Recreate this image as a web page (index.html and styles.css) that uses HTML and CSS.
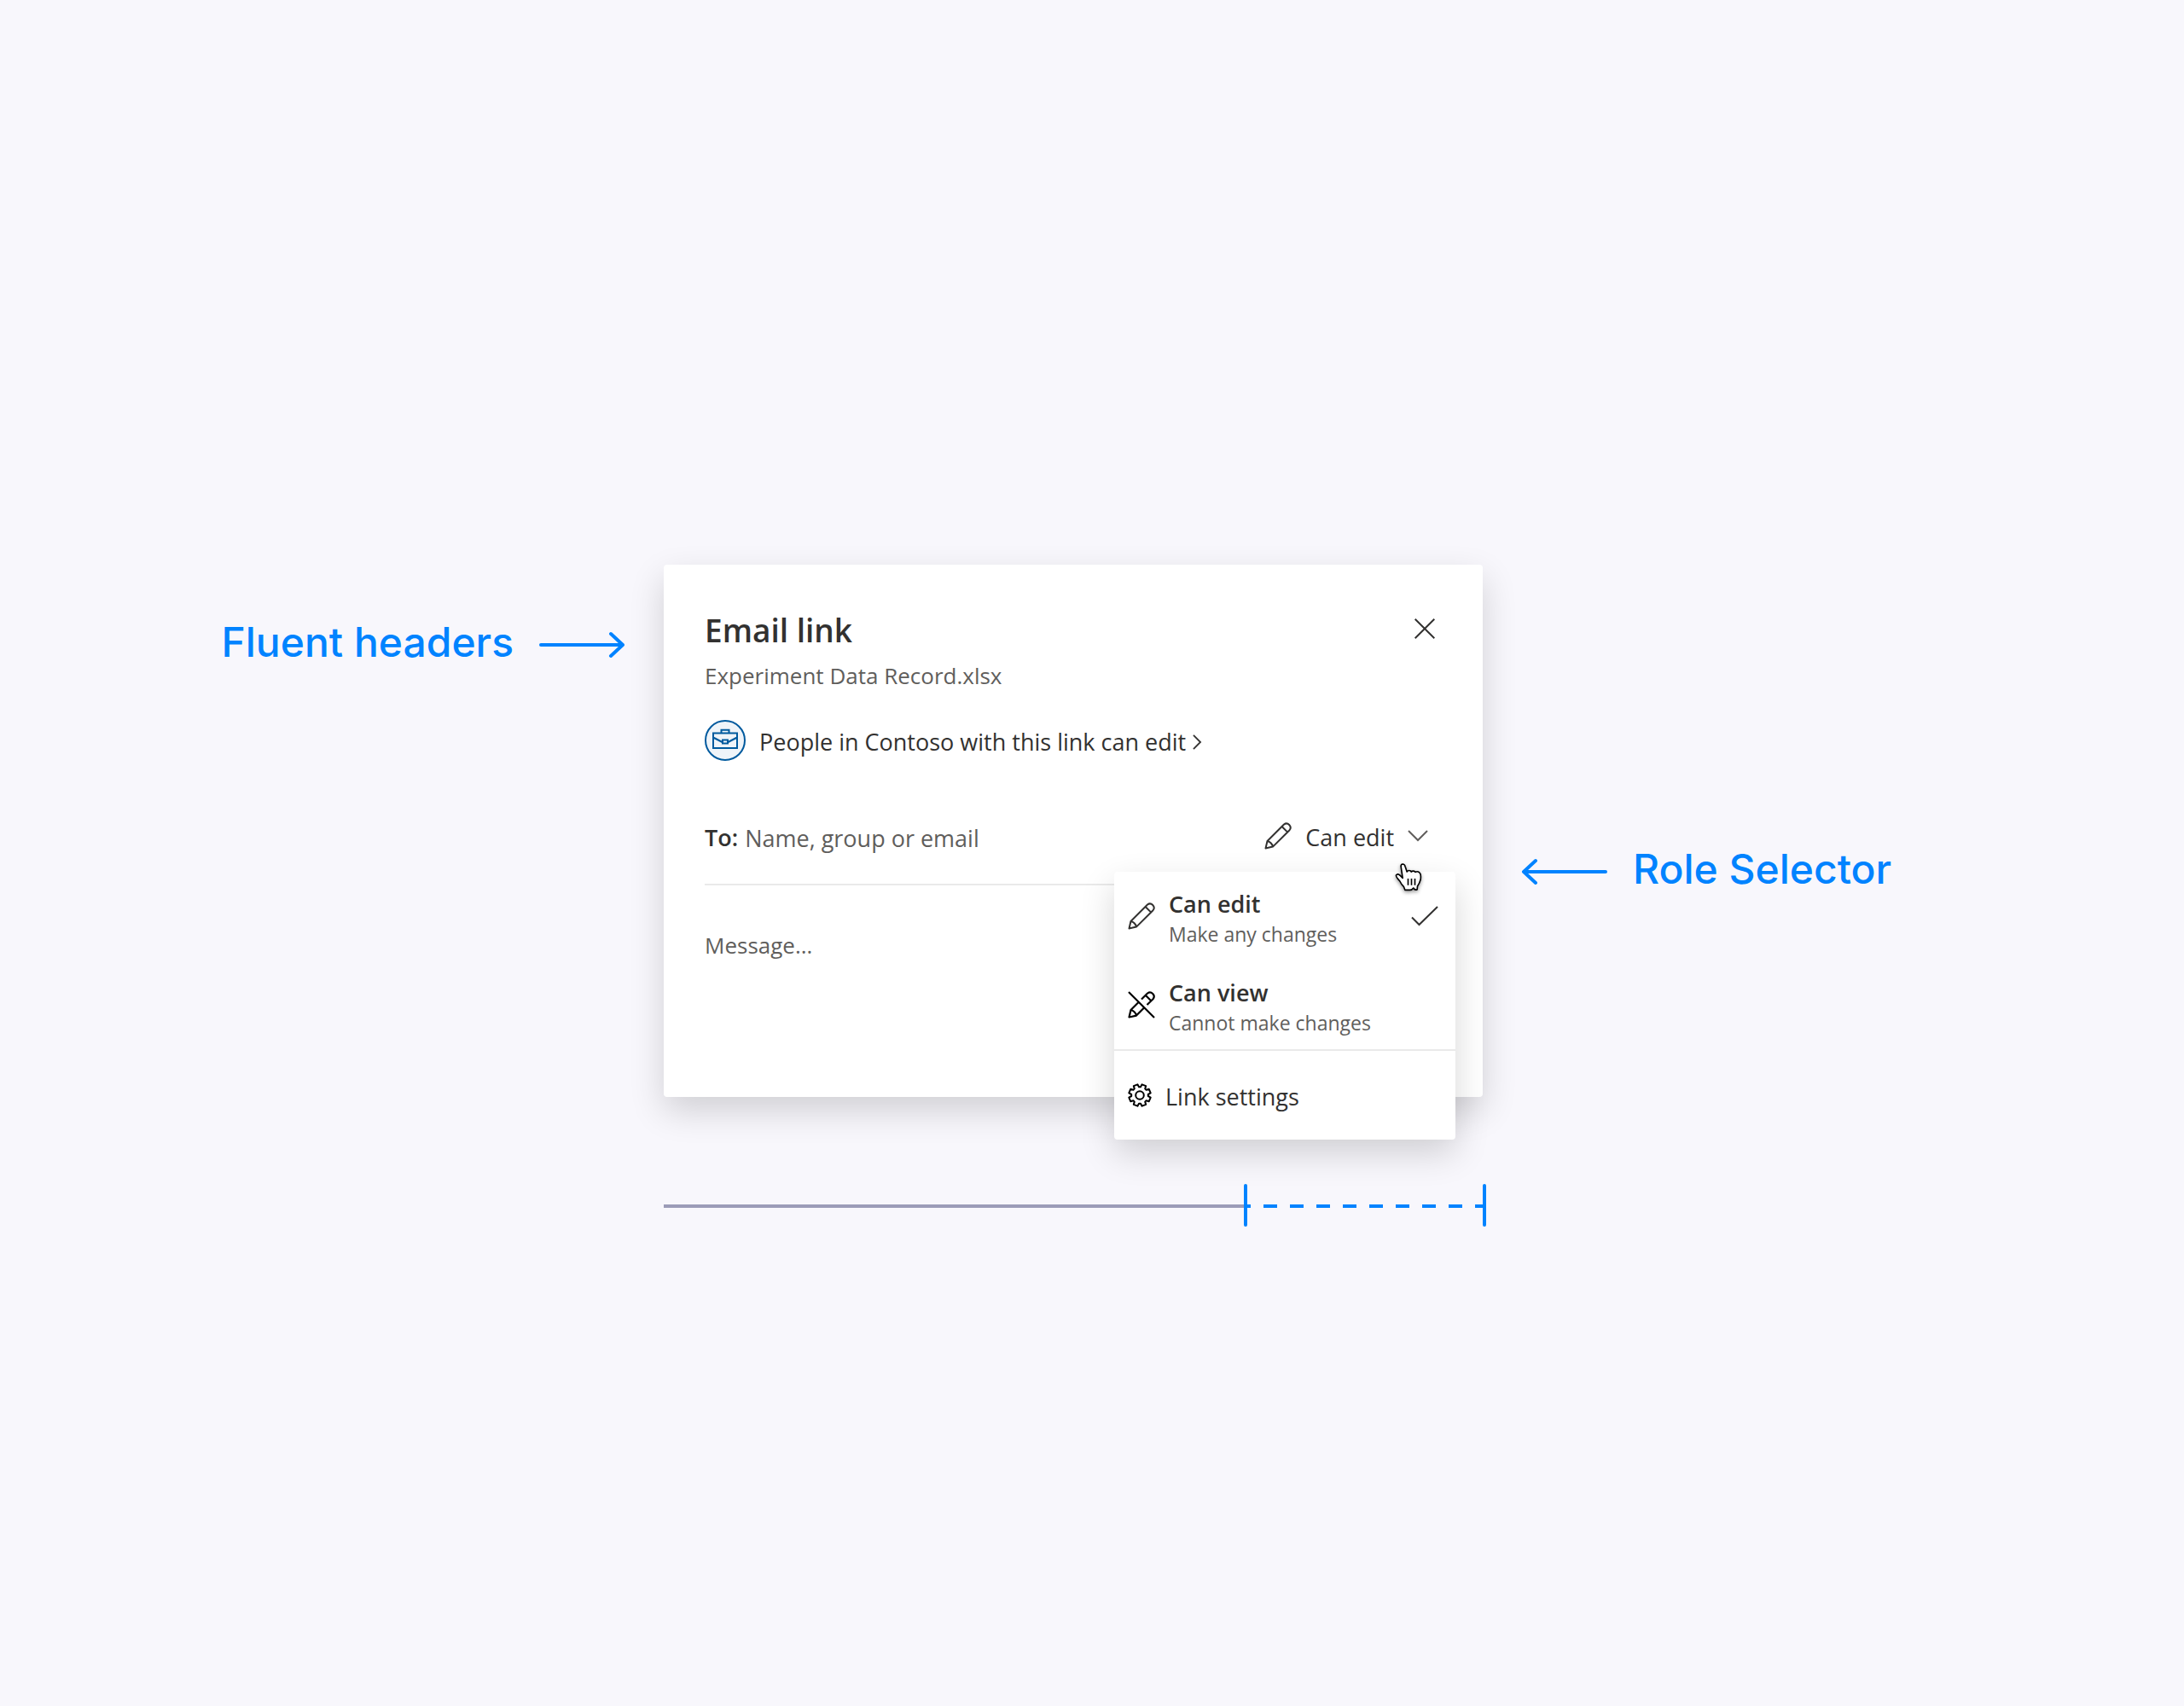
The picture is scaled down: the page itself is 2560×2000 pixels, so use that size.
FILE: index.html
```html
<!DOCTYPE html>
<html lang="en">
<head>
<meta charset="utf-8">
<title>Email link</title>
<link rel="stylesheet" href="styles.css">
</head>
<body>
<svg class="symbols" aria-hidden="true">
  <symbol id="pencil" viewBox="0 0 32 32">
    <path d="M1.5 30.5 3.5 22 23 2.5A4.7 4.7 0 0 1 29.5 9.2L10 28.6ZM20.6 5 27 11.4M3.5 22Q8.500 23 10 28.600"/>
  </symbol>
</svg>
<main class="stage">
  <div class="callout callout-header">
    <span>Fluent headers</span>
    <svg class="arrow" viewBox="0 0 100 32" aria-hidden="true"><path d="M2 16H98M84 3 98 16 84 29"/></svg>
  </div>

  <section class="card" aria-labelledby="card-title">
    <header class="card-header">
      <div>
        <h1 id="card-title">Email link</h1>
        <p class="file-name">Experiment Data Record.xlsx</p>
      </div>
      <button class="close" type="button" aria-label="Close">
        <svg viewBox="0 0 24 24"><path d="M.7.7 23.300 23.300M23.300.7.7 23.300"/></svg>
      </button>
    </header>

    <a class="link-scope" href="#">
      <svg class="badge" viewBox="0 0 48 48" aria-hidden="true">
        <circle cx="24" cy="24" r="23"/>
        <path d="M10 15.500H38V33H10ZM19.500 15V11.800H28.500V15M10 20.500 20.500 26M27.500 26 38 20.500M21 23.500H27V27.500H21Z"/>
      </svg>
      <span>People in Contoso with this link can edit</span>
      <svg class="chevron-right" viewBox="0 0 11 20" aria-hidden="true"><path d="M1 1 10 10 1 19"/></svg>
    </a>

    <div class="recipients">
      <label for="to">To:</label>
      <input id="to" type="text" placeholder="Name, group or email">
      <button class="role" type="button" aria-haspopup="menu" aria-expanded="true">
        <svg class="icon" aria-hidden="true"><use href="#pencil"/></svg>
        <span>Can edit</span>
        <svg class="chevron-down" viewBox="0 0 24 14" aria-hidden="true"><path d="M1 1 12 12 23 1"/></svg>
      </button>

      <div class="menu" role="menu">
        <button class="menu-item" type="button" role="menuitemradio" aria-checked="true">
          <svg class="icon" aria-hidden="true"><use href="#pencil"/></svg>
          <span class="menu-text"><strong>Can edit</strong><small>Make any changes</small></span>
          <svg class="check" viewBox="0 0 32 24" aria-hidden="true"><path d="M1 13.500 9.500 22 31 1"/></svg>
        </button>
        <button class="menu-item" type="button" role="menuitemradio" aria-checked="false">
          <svg class="icon icon-strong" viewBox="0 0 32 32" aria-hidden="true">
            <path d="M1 1 31 31M16 9.500 23 2.500A4.700 4.700 0 0 1 29.500 9.200L22.500 16M21 5 27 11M12.500 13 3.500 22 1.500 30.500 10 28.600 19 19.500M3.500 22Q8.500 23 10 28.600"/>
          </svg>
          <span class="menu-text"><strong>Can view</strong><small>Cannot make changes</small></span>
        </button>
        <button class="menu-item settings" type="button" role="menuitem">
          <svg class="gear" viewBox="0 0 28 28" aria-hidden="true">
            <circle cx="14" cy="14" r="4.800"/>
            <path d="M13 4.200H15L16.600 1.300 21.200 3.200 20.200 6.400 21.600 7.800 24.800 6.800 26.700 11.400 23.800 13V15L26.700 16.600 24.800 21.200 21.600 20.200 20.200 21.600 21.200 24.800 16.600 26.700 15 23.800H13L11.400 26.700 6.800 24.800 7.800 21.600 6.400 20.200 3.200 21.200 1.300 16.600 4.200 15V13L1.300 11.400 3.200 6.800 6.400 7.800 7.800 6.400 6.800 3.200 11.400 1.300Z"/>
          </svg>
          <span>Link settings</span>
        </button>
      </div>

      <svg class="pointer" viewBox="0 0 104 108" aria-hidden="true">
        <path class="hand" d="M24 15Q23 7 30 6Q37 6 39 15L45 33Q50 26 58 30L60 33Q67 27 75 34Q84 29 91 38Q95 44 93 60Q90 72 82 84L81 95Q73 99 68 90Q61 99 54 97H38L34 86Q25 77 20 66Q5 50 7 45Q13 37 22 47L30 55Z"/>
        <path d="M49 57V80M61 57V80M73 57V80"/>
      </svg>
    </div>

    <textarea class="message" rows="2" placeholder="Message..." aria-label="Message"></textarea>
  </section>

  <div class="callout callout-role">
    <svg class="arrow" viewBox="0 0 100 32" aria-hidden="true"><path d="M98 16H2M16 3 2 16 16 29"/></svg>
    <span>Role Selector</span>
  </div>

  <div class="ruler" aria-hidden="true">
    <div class="ruler-line"></div>
    <svg class="ruler-span" viewBox="0 0 284 52">
      <path d="M4 26H282" stroke-dasharray="16 15" stroke-dashoffset="12"/>
      <path d="M2 2V48M282 2V48" stroke-linecap="round"/>
    </svg>
  </div>
</main>
</body>
</html>
```
FILE: styles.css
```css
:root {
  --blue: #0083ff;
  --ink: #323130;
  --muted: #605e5c;
  --rule: #eaeaea;
  --body: 27px;
  --note: 26px;
  --small: 23px;
  --shadow: 0 16px 40px rgba(0, 0, 0, .16);
}

* { box-sizing: border-box; }

body {
  margin: 0;
  background: #f8f7fc;
  color: var(--ink);
  font: var(--body)/40px "Segoe UI", "Open Sans", sans-serif;
}

svg {
  display: block;
  flex: none;
  fill: none;
  stroke: currentColor;
  stroke-width: 2;
  overflow: visible;
}

button, input, textarea {
  margin: 0;
  padding: 0;
  border: 0;
  outline: 0;
  background: none;
  color: inherit;
  font: inherit;
}

h1, p { margin: 0; }

.symbols { display: none; }

.stage {
  display: grid;
  grid-template-columns: 1fr 960px 1fr;
  column-gap: 46px;
  align-content: center;
  min-height: 100vh;
  padding: 102px 44px 0 0;
}

.callout {
  display: flex;
  align-items: center;
  align-self: start;
  gap: 30px;
  color: var(--blue);
  font: 500 48px/60px Inter, sans-serif;
  white-space: nowrap;
}

.callout span { padding-bottom: 6px; }

.callout-header { justify-content: flex-end; margin-top: 61px; }
.callout-role { margin-top: 327px; }

.arrow {
  width: 100px;
  height: 32px;
  stroke-width: 4;
  stroke-linecap: round;
  stroke-linejoin: round;
}

.card {
  min-height: 624px;
  padding: 52px 48px 32px;
  border-radius: 4px;
  background: #fff;
  box-shadow: var(--shadow);
}

.card-header { display: flex; justify-content: space-between; }

h1 { font-size: 37px; font-weight: 600; line-height: 50px; }

.file-name { margin-top: 8px; color: var(--muted); font-size: var(--note); }

.close {
  display: grid;
  place-items: center;
  width: 40px;
  height: 40px;
  margin-top: 3px;
}

.close svg { width: 24px; height: 24px; }

.link-scope {
  display: flex;
  align-items: center;
  gap: 8px;
  height: 48px;
  margin-top: 32px;
  color: inherit;
  text-decoration: none;
}

.link-scope span,
.recipients label,
.recipients input,
.role span,
.settings span { padding-top: 4px; }

.badge { width: 48px; height: 48px; margin-right: 8px; color: #005a9e; }
.badge circle { fill: #eff4f9; }

.chevron-right { width: 10px; height: 18px; margin-top: 4px; }

.recipients {
  position: relative;
  display: flex;
  align-items: center;
  gap: 8px;
  margin-top: 64px;
  padding-bottom: 32px;
  border-bottom: 2px solid var(--rule);
}

.recipients label { font-weight: 600; }
.recipients input { flex: 1; min-width: 0; height: 48px; }

::placeholder { color: var(--muted); opacity: 1; }

.role {
  display: flex;
  align-items: center;
  gap: 16px;
  padding-right: 16px;
}

.icon { width: 32px; height: 32px; stroke-linejoin: round; }
.icon-strong { color: #000; stroke-width: 2.2; }

.chevron-down { width: 24px; height: 14px; color: var(--muted); }

.menu {
  position: absolute;
  top: 66px;
  right: -16px;
  width: 400px;
  border-radius: 4px;
  background: #fff;
  box-shadow: var(--shadow);
}

.menu-item {
  display: flex;
  align-items: center;
  gap: 16px;
  width: 100%;
  height: 104px;
  padding: 0 20px 0 16px;
  text-align: left;
}

.menu-text { flex: 1; padding-top: 6px; }
.menu-text strong { display: block; font-weight: 600; line-height: 36px; }
.menu-text small { display: block; color: var(--muted); font-size: var(--small); line-height: 34px; }

.check { width: 32px; height: 24px; }

.settings { height: 106px; border-top: 2px solid var(--rule); }

.gear { width: 28px; height: 28px; color: #000; stroke-linejoin: round; }

.pointer {
  position: absolute;
  top: 55px;
  right: 21px;
  width: 35px;
  height: 36px;
  color: #000;
  stroke-width: 5;
  stroke-linejoin: round;
  filter: drop-shadow(0 2px 2px rgba(0, 0, 0, .4));
}

.hand { fill: #fff; }

.message {
  display: block;
  width: 100%;
  margin-top: 50px;
  font-size: var(--note);
  resize: none;
}

.ruler {
  grid-column: 2;
  display: flex;
  align-items: center;
  margin: 102px -4px 0 0;
}

.ruler-line { flex: 1; height: 4px; background: #9c9cb8; }

.ruler-span { width: 284px; height: 52px; color: var(--blue); stroke-width: 4; }
```
